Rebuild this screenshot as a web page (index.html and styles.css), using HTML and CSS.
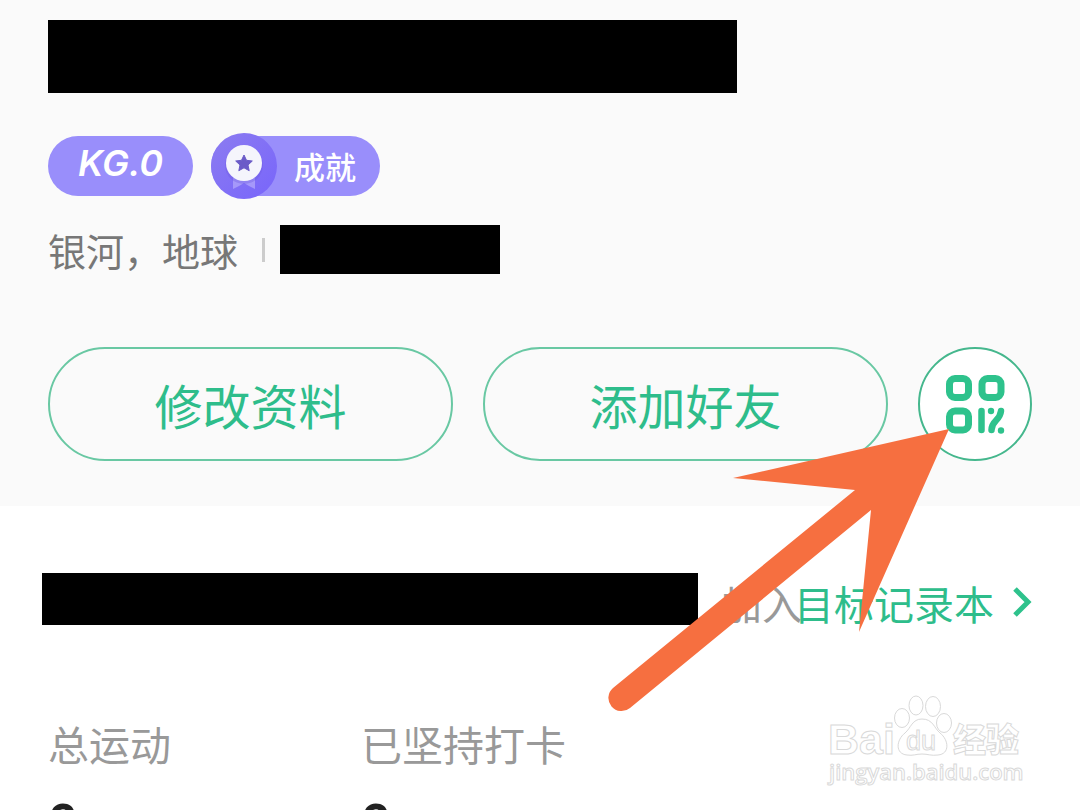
FILE: index.html
```html
<!DOCTYPE html>
<html lang="zh-CN">
<head>
  <meta charset="UTF-8" />
  <meta name="viewport" content="width=device-width, initial-scale=1.0"/>
  <title>个人主页</title>
  <link rel="stylesheet" href="styles.css">
</head>
<body>
  <header class="profile">
    <div class="mask name-mask"></div>

    <div class="badges">
      <span class="badge level">KG.0</span>
      <a href="#" class="badge achievement">
        <svg class="medal" viewBox="0 0 66 66" aria-hidden="true">
          <defs>
            <linearGradient id="medalBg" x1="0" y1="0" x2="1" y2="1">
              <stop offset="0" stop-color="#8c7cf0"/>
              <stop offset="1" stop-color="#7865fb"/>
            </linearGradient>
          </defs>
          <circle cx="33" cy="33" r="33" fill="url(#medalBg)"/>
          <path d="M22 45h22v11l-6-3-5-3-5 3-6 3z" fill="#a598fa"/>
          <circle cx="33" cy="32" r="19" fill="#6c5ae0" opacity=".35"/>
          <circle cx="33" cy="30" r="18" fill="#f5f5fc"/>
          <path d="M33 22l2.500 5.300 5.800.7-4.300 4 1.200 5.700-5.200-2.900-5.200 2.900 1.200-5.700-4.300-4 5.800-.7z" fill="#6b5bc8" stroke="#6b5bc8" stroke-width="1" stroke-linejoin="round"/>
        </svg>
        <span>成就</span>
      </a>
    </div>

    <div class="location">
      <span>银河，地球</span>
      <span class="divider"></span>
      <div class="mask info-mask"></div>
    </div>

    <div class="actions">
      <button class="action-btn">修改资料</button>
      <button class="action-btn">添加好友</button>
      <button class="qr-btn" aria-label="二维码">
        <svg viewBox="0 0 60 60" aria-hidden="true">
          <g fill="none" stroke="#2ec28c" stroke-width="7">
            <rect x="4.500" y="4.500" width="19" height="19" rx="5.500"/>
            <rect x="37" y="4.500" width="19" height="19" rx="5.500"/>
            <rect x="4.500" y="37" width="19" height="19" rx="5.500"/>
          </g>
          <g fill="none" stroke="#2ec28c" stroke-width="6.500" stroke-linecap="round">
            <path d="M36.500 37v19"/>
            <path d="M56 37q-.5 5-5 9.500T46.500 56"/>
          </g>
          <circle cx="46" cy="37" r="3.200" fill="#2ec28c"/>
          <circle cx="56" cy="56.500" r="3.200" fill="#2ec28c"/>
        </svg>
      </button>
    </div>
  </header>

  <main class="records">
    <div class="goal">
      <div class="mask goal-mask"></div>
      <span class="goal-text">加入</span>
      <a href="#" class="goal-link">
        目标记录本
        <svg viewBox="0 0 20 32" aria-hidden="true">
          <path d="M3 2l13 13L3 28" fill="none" stroke="#2ec28c" stroke-width="5"/>
        </svg>
      </a>
    </div>

    <div class="stats">
      <div class="stat">
        <span class="stat-label">总运动</span>
        <span class="stat-value">0</span>
      </div>
      <div class="stat">
        <span class="stat-label">已坚持打卡</span>
        <span class="stat-value">0</span>
      </div>
    </div>
  </main>

  <!-- Pointer to the QR code button -->
  <svg class="pointer" viewBox="0 0 342 283" aria-hidden="true">
    <path d="M341 0L125 49l122 12L5 259a13 13 0 0 0 17 20L263 81l-12 122z" fill="#f66f40"/>
  </svg>

  <!-- Watermark -->
  <svg class="watermark" viewBox="0 0 200 96" role="img" aria-label="Baidu 经验">
    <g fill="#fff" stroke="#d9d9d9" stroke-width="1">
      <text class="wm-logo" x="4" y="59">Bai</text>
      <ellipse cx="78" cy="23" rx="7.500" ry="9.500"/>
      <ellipse cx="92" cy="10.500" rx="7" ry="9.500"/>
      <ellipse cx="109" cy="11.500" rx="7.500" ry="10"/>
      <ellipse cx="120" cy="28" rx="7.500" ry="9.500"/>
      <path d="M98 24c11 0 12 9 18 14 9 7 10 21-2 22-7 1-10-1-16-1s-9 2-15 1c-12-1-11-15-2-22 6-5 7-14 17-14z"/>
      <text class="wm-du" x="82" y="55">du</text>
      <text class="wm-cn" x="129" y="57">经验</text>
      <text class="wm-url" x="5" y="85">jingyan.baidu.com</text>
    </g>
  </svg>
</body>
</html>
```

FILE: styles.css
```css
* {
  box-sizing: border-box;
}

body {
  position: relative;
  height: 100vh;
  margin: 0;
  overflow: hidden;
  background-color: #fff;
  color: #999;
  font-family: "Noto Sans CJK SC", sans-serif;
  font-size: 40px;
  line-height: 60px;
}

a {
  color: inherit;
  text-decoration: none;
}

.mask {
  background-color: #000;
}

/* Profile header */
.profile {
  padding: 20px 48px 45px;
  background-color: #fafafa;
}

.name-mask {
  width: 70%;
  height: 73px;
}

.badges {
  display: flex;
  align-items: center;
  gap: 18px;
  margin-top: 43px;
}

.badge {
  display: flex;
  align-items: center;
  height: 60px;
  border-radius: 30px;
  background-color: #998efb;
  color: #fff;
}

.level {
  padding: 0 30px 6px;
  font-family: Inter, sans-serif;
  font-size: 36px;
  font-style: italic;
  font-weight: 600;
}

.achievement {
  gap: 17px;
  padding-right: 24px;
  font-size: 31px;
  font-weight: 500;
}

.medal {
  width: 66px;
  height: 66px;
}

.location {
  display: flex;
  align-items: center;
  margin-top: 29px;
  color: #777;
  font-size: 38px;
  line-height: 49px;
}

.divider {
  width: 3px;
  height: 24px;
  margin: 0 15px 0 24px;
  background-color: #ccc;
}

.info-mask {
  width: 220px;
  height: 49px;
}

.actions {
  display: flex;
  gap: 30px;
  margin-top: 73px;
}

.action-btn,
.qr-btn {
  height: 114px;
  border: 2px solid #69c8a3;
  border-radius: 57px;
  background-color: transparent;
  color: #2ebd8b;
  font-family: inherit;
  font-size: 48px;
  cursor: pointer;
}

.action-btn {
  flex: 1;
}

.qr-btn {
  display: flex;
  align-items: center;
  justify-content: center;
  width: 114px;
  padding: 0;
  border-color: #45b78d;
  background-color: #fff;
}

.qr-btn svg {
  width: 60px;
  height: 60px;
}

/* Goal row and totals */
.records {
  padding: 67px 48px 0 42px;
}

.goal {
  display: flex;
  align-items: flex-start;
  height: 52px;
}

.goal-mask {
  flex: 1;
  height: 52px;
  margin-right: 24px;
}

.goal-link {
  display: flex;
  align-items: center;
  gap: 18px;
  margin-left: -8px;
  color: #2ebd8b;
}

.goal-link svg {
  width: 20px;
  height: 32px;
}

.stats {
  display: grid;
  grid-template-columns: repeat(3, 1fr);
  margin: 88px 45px 0 6px;
}

.stat {
  display: flex;
  flex-direction: column;
}

.stat-label {
  font-size: 41px;
}

.stat-value {
  margin-top: 21px;
  color: #222;
  font-family: Roboto, sans-serif;
  font-size: 52px;
  font-weight: 700;
}

.pointer {
  position: absolute;
  top: 429px;
  right: 130px;
  width: 342px;
}

.watermark {
  position: absolute;
  top: 695px;
  right: 56px;
  width: 200px;
}

.wm-logo {
  font: 700 43px "Liberation Sans", sans-serif;
}

.wm-du {
  font: 400 27px "Liberation Sans", sans-serif;
}

.wm-cn {
  font: 900 33px "Noto Sans CJK SC", sans-serif;
}

.wm-url {
  font: 600 22px "Open Sans", sans-serif;
}
```
